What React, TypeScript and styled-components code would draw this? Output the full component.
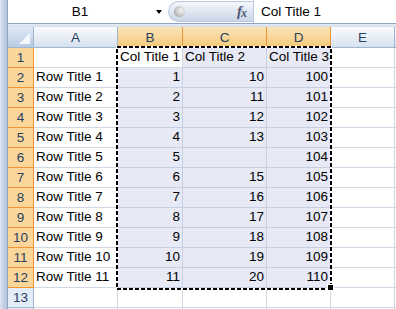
import React from "react";
import styled, { createGlobalStyle } from "styled-components";

const GlobalStyle = createGlobalStyle`
  html, body { margin: 0; padding: 0; background: #fff; }
  body { font-family: "Liberation Sans", Arial, sans-serif; }
`;

const Window = styled.div`
  display: flex;
  width: 396px;
  height: 309px;
  overflow: hidden;
  background: #fff;
  font-family: "Liberation Sans", Arial, sans-serif;
  font-size: 13.5px;
  color: #000;
`;

const Frame = styled.div`
  flex: 0 0 7px;
  background: linear-gradient(to right, #dde6f1 0%, #c5d3e4 45%, #b4c5db 100%);
  border-right: 1px solid #8ea3bf;
`;

const Main = styled.div`
  flex: 1;
  display: flex;
  flex-direction: column;
  min-width: 0;
`;

const FormulaBar = styled.div`
  display: flex;
  align-items: stretch;
  height: 23px;
  border-bottom: 1px solid #8ea3bf;
  background: #fff;
`;

const NameBox = styled.div`
  display: flex;
  align-items: center;
  width: 160px;
  flex: 0 0 160px;
`;

const NameText = styled.div`
  flex: 1;
  text-align: center;
`;

const Arrow = styled.div`
  width: 0;
  height: 0;
  margin: 0 6px 0 4px;
  border-left: 3.5px solid transparent;
  border-right: 3.5px solid transparent;
  border-top: 4px solid #000;
`;

const Toolbar = styled.div`
  flex: 0 0 84px;
  display: flex;
  align-items: center;
  justify-content: space-between;
  margin: 1px 0 1px;
  border-radius: 11px 0 0 11px;
  border: 1px solid #b9c8dc;
  border-right: none;
  background: linear-gradient(#f6f8fb 0%, #e1e8f2 45%, #c9d6e8 100%);
`;

const Knob = styled.div`
  width: 11px;
  height: 11px;
  margin-left: 5px;
  border-radius: 50%;
  background: radial-gradient(circle at 65% 40%, #f4f4f4 0%, #c4c4c4 55%, #8f8f8f 100%);
`;

const Fx = styled.div`
  margin-right: 7px;
  font-family: "Liberation Serif", "Times New Roman", serif;
  font-style: italic;
  font-weight: bold;
  font-size: 15px;
  color: #4d5b70;
  letter-spacing: -1px;
`;

const FxSub = styled.span`
  font-size: 12px;
  position: relative;
  top: 1px;
`;

const FormulaInput = styled.div`
  flex: 1;
  display: flex;
  align-items: center;
  padding-left: 7px;
  border-left: 1px solid #b9c8dc;
  white-space: nowrap;
`;

const Band = styled.div`
  height: 3px;
  background: linear-gradient(#e6edf6, #d2dceb);
`;

const Sheet = styled.div`
  position: relative;
  flex: 1;
  display: grid;
  grid-template-columns: 26px 84px 65px 84px 64px 64px 1fr;
  grid-template-rows: 21px;
  grid-auto-rows: 20px;
  overflow: hidden;
`;

const Corner = styled.div`
  position: relative;
  border-right: 1px solid #9eb6ce;
  border-bottom: 1px solid #9eb6ce;
  background: linear-gradient(#dfe8f4, #b9cbe2);
  &::after {
    content: "";
    position: absolute;
    right: 3px;
    bottom: 3px;
    width: 0;
    height: 0;
    border-left: 11px solid transparent;
    border-bottom: 11px solid #f4f7fb;
  }
`;

const ColHeader = styled.div<{ $selected?: boolean }>`
  display: flex;
  align-items: center;
  justify-content: center;
  color: #27415f;
  border-right: 1px solid ${(p) => (p.$selected ? "#f29536" : "#9eb6ce")};
  border-bottom: 1px solid ${(p) => (p.$selected ? "#f29536" : "#9eb6ce")};
  background: ${(p) =>
    p.$selected
      ? "linear-gradient(#fbe3b5 0%, #f9d99f 45%, #f5c977 100%)"
      : "linear-gradient(#f9fbfd 0%, #e9eff7 50%, #d6e0ee 100%)"};
`;

const RowHeader = styled.div<{ $selected?: boolean }>`
  display: flex;
  align-items: center;
  justify-content: center;
  color: #27415f;
  border-right: 1px solid ${(p) => (p.$selected ? "#f29536" : "#9eb6ce")};
  border-bottom: 1px solid ${(p) => (p.$selected ? "#f29536" : "#9eb6ce")};
  background: ${(p) => (p.$selected ? "#fbd69b" : "#e4ecf7")};
`;

const Cell = styled.div<{ $selected?: boolean; $right?: boolean }>`
  display: flex;
  align-items: flex-end;
  justify-content: ${(p) => (p.$right ? "flex-end" : "flex-start")};
  padding: 0 2px 2px 2px;
  white-space: nowrap;
  overflow: visible;
  border-right: 1px solid ${(p) => (p.$selected ? "#c9cfe2" : "#d0d7e5")};
  border-bottom: 1px solid ${(p) => (p.$selected ? "#c9cfe2" : "#d0d7e5")};
  background: ${(p) => (p.$selected ? "#e7e9f4" : "#fff")};
  line-height: 16px;
`;

const Marquee = styled.svg`
  position: absolute;
  left: 108px;
  top: 19px;
  overflow: visible;
  pointer-events: none;
`;

const FillHandle = styled.div`
  position: absolute;
  left: 319px;
  top: 257px;
  width: 5px;
  height: 5px;
  background: #000;
  border: 1px solid #fff;
`;

type Row = [string, string, string, string];

const rows: Row[] = [["", "Col Title 1", "Col Title 2", "Col Title 3"]];
for (let k = 1; k <= 11; k++) {
  rows.push([`Row Title ${k}`, String(k), k === 5 ? "" : String(9 + k), String(99 + k)]);
}

const columns = ["A", "B", "C", "D", "E"];

export default function App() {
  return (
    <>
      <GlobalStyle />
      <Window>
        <Frame />
        <Main>
          <FormulaBar>
            <NameBox>
              <NameText>B1</NameText>
              <Arrow />
            </NameBox>
            <Toolbar>
              <Knob />
              <Fx>
                f<FxSub>x</FxSub>
              </Fx>
            </Toolbar>
            <FormulaInput>Col Title 1</FormulaInput>
          </FormulaBar>
          <Band />
          <Sheet>
            <Corner />
            {columns.map((c, i) => (
              <ColHeader key={c} $selected={i >= 1 && i <= 3}>
                {c}
              </ColHeader>
            ))}
            <ColHeader />
            {rows.map((r, ri) => (
              <React.Fragment key={ri}>
                <RowHeader $selected>{ri + 1}</RowHeader>
                <Cell>{r[0]}</Cell>
                <Cell $selected={ri > 0} $right={ri > 0}>
                  {r[1]}
                </Cell>
                <Cell $selected $right={ri > 0}>
                  {r[2]}
                </Cell>
                <Cell $selected $right={ri > 0}>
                  {r[3]}
                </Cell>
                <Cell />
                <Cell />
              </React.Fragment>
            ))}
            {["13", ""].map((n, i) => (
              <React.Fragment key={i}>
                <RowHeader>{n}</RowHeader>
                <Cell />
                <Cell />
                <Cell />
                <Cell />
                <Cell />
                <Cell />
              </React.Fragment>
            ))}
            <Marquee width="216" height="244" viewBox="0 0 216 244" shapeRendering="crispEdges">
              <rect x="1" y="1" width="214" height="242" fill="none" stroke="#fff" strokeWidth="2" />
              <rect x="1" y="1" width="214" height="242" fill="none" stroke="#000" strokeWidth="2" strokeDasharray="4 2" />
            </Marquee>
            <FillHandle />
          </Sheet>
        </Main>
      </Window>
    </>
  );
}
